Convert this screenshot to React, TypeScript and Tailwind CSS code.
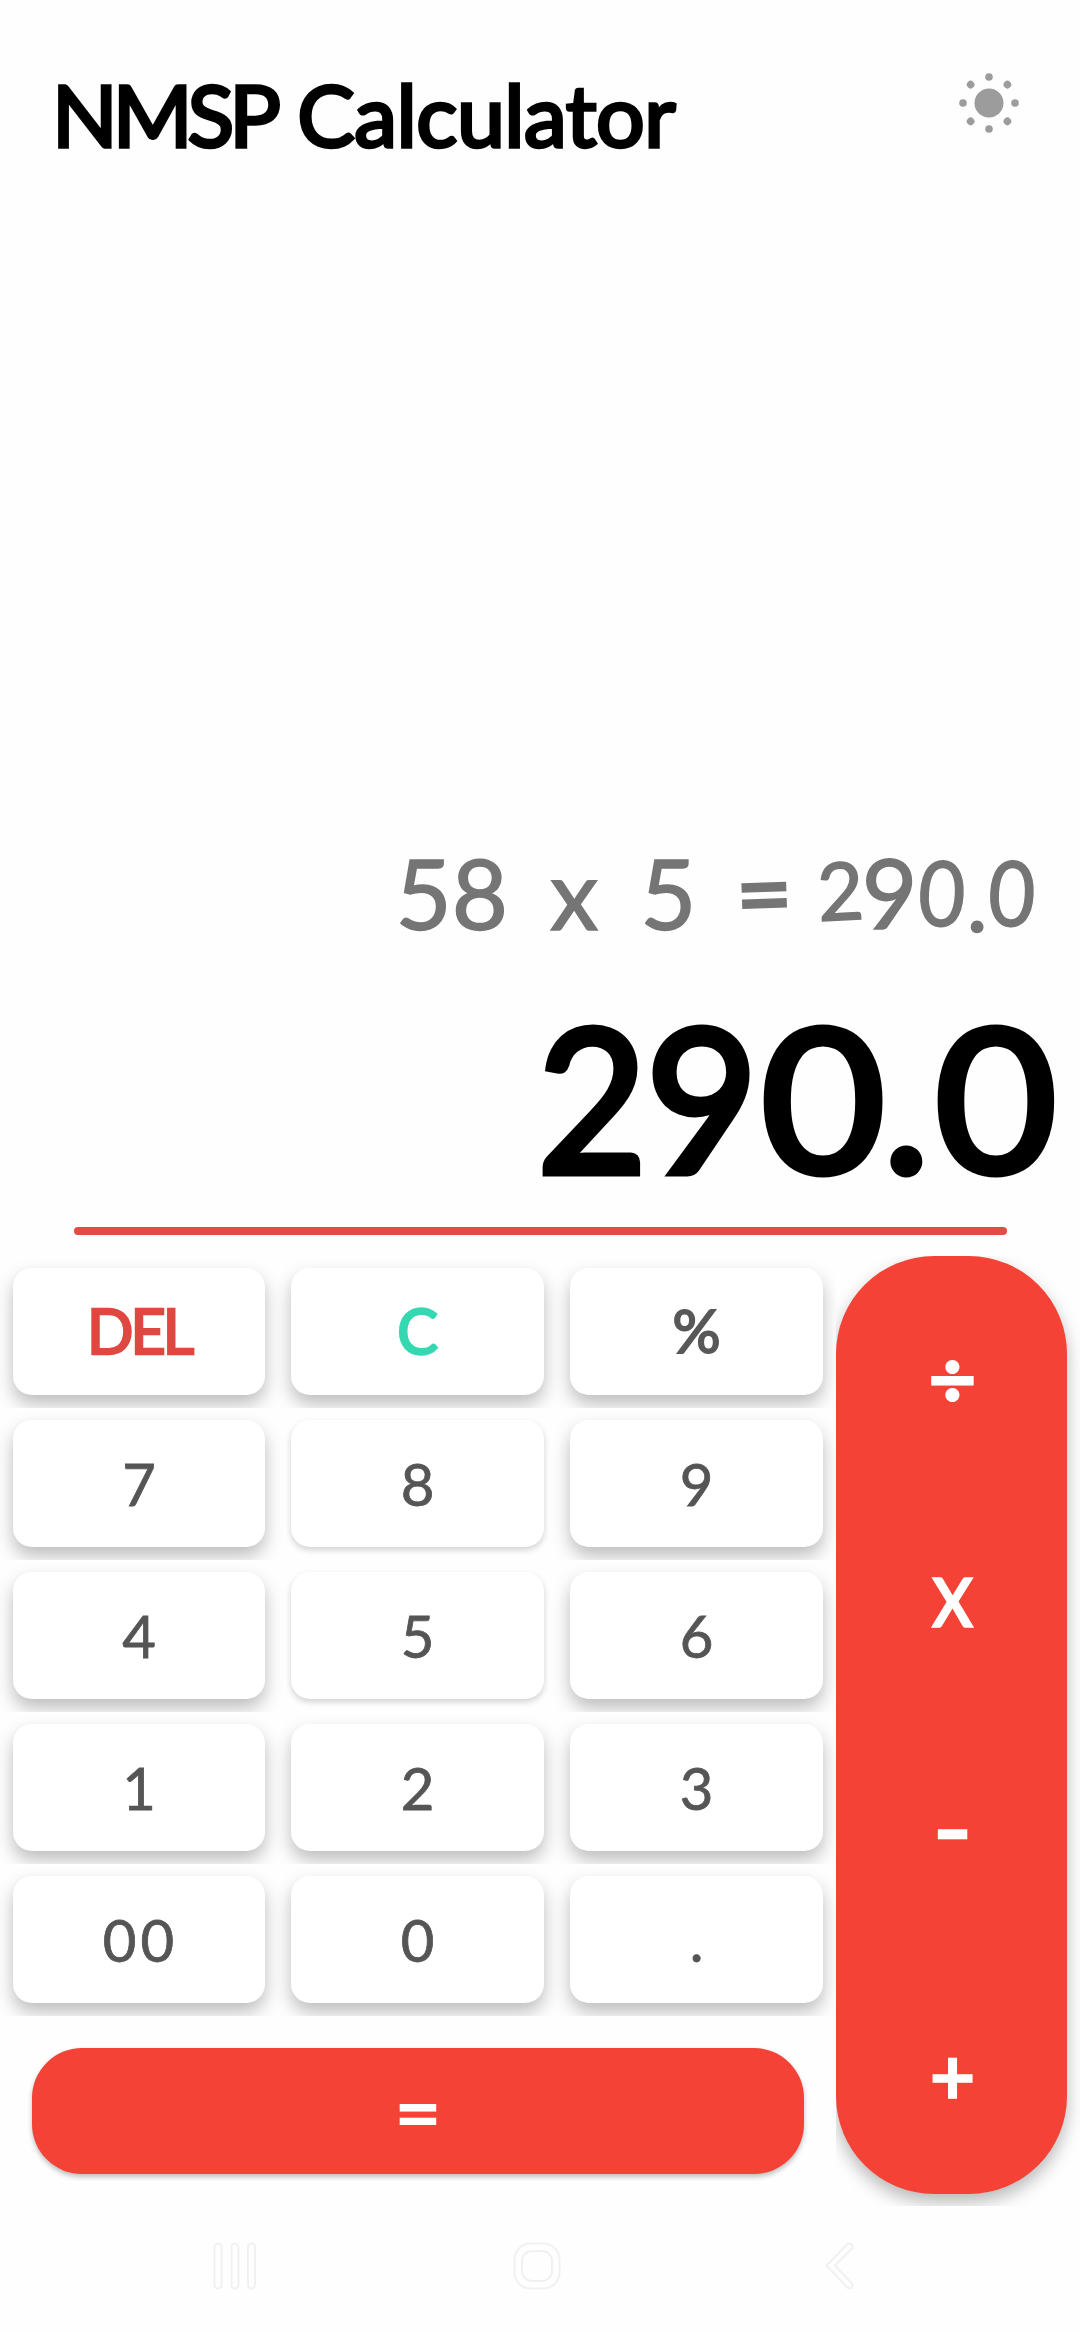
import clsx from 'clsx';

const rows = [
    ['DEL', 'C', '%'],
    ['7', '8', '9'],
    ['4', '5', '6'],
    ['1', '2', '3'],
    ['00', '0', '.'],
];

const operators = [
    { label: '÷', className: 'h-[242px] text-[80px] [-webkit-text-stroke:4px_white]' },
    { label: 'X', className: 'h-[206px] scale-x-90 text-[66px] [-webkit-text-stroke:3.5px_white]' },
    { label: '-', className: 'h-[244px] scale-x-110 text-[98px] [-webkit-text-stroke:2.5px_white]' },
    { label: '+', className: 'h-[246px] pt-[8px] text-[76px] [-webkit-text-stroke:3.5px_white]' },
];

const SunIcon = () => (
    <svg width="60" height="60" viewBox="-30 -30 60 60" fill="#9c9c9c">
        <circle r="14.5" />
        {[0, 45, 90, 135, 180, 225, 270, 315].map(angle => (
            <circle key={angle} cx="26" r="3.8" transform={`rotate(${angle})`} />
        ))}
    </svg>
);

const NavBar = () => (
    <div className="flex h-[126px] w-full pt-[36px]">
        <svg className="ml-[212px]" width="46" height="48" viewBox="0 0 46 48" fill="none" stroke="#f1f1f1" strokeWidth="2">
            <rect x="2.5" y="1.5" width="7" height="45" rx="3.5" />
            <rect x="19.5" y="1.5" width="7" height="45" rx="3.5" />
            <rect x="36" y="1.5" width="7" height="45" rx="3.5" />
        </svg>
        <svg className="ml-[255px]" width="48" height="48" viewBox="0 0 48 48" fill="none" stroke="#f1f1f1" strokeWidth="2">
            <rect x="1.5" y="1.5" width="45" height="45" rx="16" />
            <rect x="9" y="9" width="30" height="30" rx="10" />
        </svg>
        <svg className="ml-[263px]" width="32" height="48" viewBox="0 0 32 48" fill="none" stroke="#f1f1f1" strokeWidth="2" strokeLinejoin="round">
            <path d="M24 1.5 L2.5 23.5 L24 46 Q29 47 28.500 42 L11 23.500 L28.500 6 Q29 1 24 1.500 Z" />
        </svg>
    </div>
);

const Key = ({ label }: { label: string }) => (
    <div className="w-[279px] px-[13px] pt-[12px] first:w-[278px]">
        <button
            className={clsx(
                'flex h-[127px] w-full items-center justify-center rounded-[19px] bg-white leading-none',
                ['8', '5'].includes(label)
                    ? 'shadow-[0_3px_6px_rgba(0,0,0,0.18)]'
                    : 'shadow-[0_9px_18px_rgba(0,0,0,0.26)]',
                label === 'DEL' && 'pb-[3px] text-[61px] tracking-[-3px] text-[#de4840] [-webkit-text-stroke:2.5px_#de4840]',
                label === 'C' && 'pb-[3px] text-[61px] text-[#35d8b0] [-webkit-text-stroke:2.5px_#35d8b0]',
                label === '%' && 'pb-[3px] text-[60px] text-[#585858] [-webkit-text-stroke:2px_#585858]',
                label === '00' && 'pl-[3px] tracking-[4px]',
                !['DEL', 'C', '%'].includes(label) && 'text-[58px] text-[#555555] [-webkit-text-stroke:0.8px_#555555]',
            )}
        >
            {label}
        </button>
    </div>
);

const App = () => {
    return (
        <div className="flex h-[2332px] w-[1080px] flex-col overflow-hidden bg-[#fefefe] font-['Lato',sans-serif]">
            <header className="flex h-[844px] items-start justify-between pt-[70px] pr-[61px] pl-[52px]">
                <h1 className="text-[86px] leading-[88px] tracking-[-0.5px] text-black [-webkit-text-stroke:3.5px_black]">
                    <span className="tracking-[-5px]">NMSP</span> Calculator
                </h1>
                <div className="mt-[3px]">
                    <SunIcon />
                </div>
            </header>

            <section className="flex h-[383px] flex-col items-end">
                <div className="flex h-[98px] pr-[43px] text-[97px] leading-[98px] whitespace-pre text-[#757575] [-webkit-text-stroke:1.5px_#757575]">
                    <span className="mr-[42px]">58</span>
                    <span className="mr-[42px]">x</span>
                    <span className="mr-[40px]">5</span>
                    <span className="mr-[24px] -translate-y-0.5 -rotate-2 [-webkit-text-stroke:3px_#757575]">=</span>
                    <span className="flex text-[90px] tracking-[-1.5px]">
                        <span className="-translate-y-1 -rotate-3 text-[80px]">2</span>
                        <span className="-translate-y-px text-[96px]">9</span>
                        <span className="-translate-y-0.5 rotate-3 scale-x-90">0</span>
                        <span className="translate-y-1">.</span>
                        <span className="-translate-y-0.5 rotate-3 scale-x-90">0</span>
                    </span>
                </div>
                <div className="mt-[53px] flex pr-[26px] text-[200px] leading-[203px] text-black [-webkit-text-stroke:7px_black]">
                    <span className="-mr-[6px] scale-x-95">2</span>
                    <span className="scale-x-97">9</span>
                    <span className="mr-[2px] ml-[5px] scale-x-107">0</span>
                    <span>.</span>
                    <span className="ml-[8px] scale-x-105">0</span>
                </div>
            </section>
            <div className="ml-[74px] h-[8px] w-[933px] rounded-full bg-[#e34b44]" />

            <main className="mt-[21px] flex h-[950px]">
                <div className="w-[836px]">
                    {rows.map(row => (
                        <div key={row[0]} className="flex h-[152px] w-[836px] overflow-hidden">
                            {row.map(label => (
                                <Key key={label} label={label} />
                            ))}
                        </div>
                    ))}
                    <button className="mt-[32px] ml-[32px] flex h-[126px] w-[772px] items-center justify-center rounded-[50px] bg-[#f44336] text-[80px] leading-none text-white shadow-[0_3px_5px_rgba(0,0,0,0.25)] [-webkit-text-stroke:2px_white]">
                        =
                    </button>
                </div>
                <div className="h-[950px] w-[244px] overflow-hidden">
                    <div className="flex h-[938px] w-[231px] flex-col rounded-[98px] bg-[#f44336] pl-[2px] text-white shadow-[0_8px_17px_rgba(0,0,0,0.28)]">
                        {operators.map(op => (
                            <button key={op.label} className={clsx('flex items-center justify-center leading-none', op.className)}>
                                {op.label}
                            </button>
                        ))}
                    </div>
                </div>
            </main>
            <NavBar />
        </div>
    );
};

export default App;
